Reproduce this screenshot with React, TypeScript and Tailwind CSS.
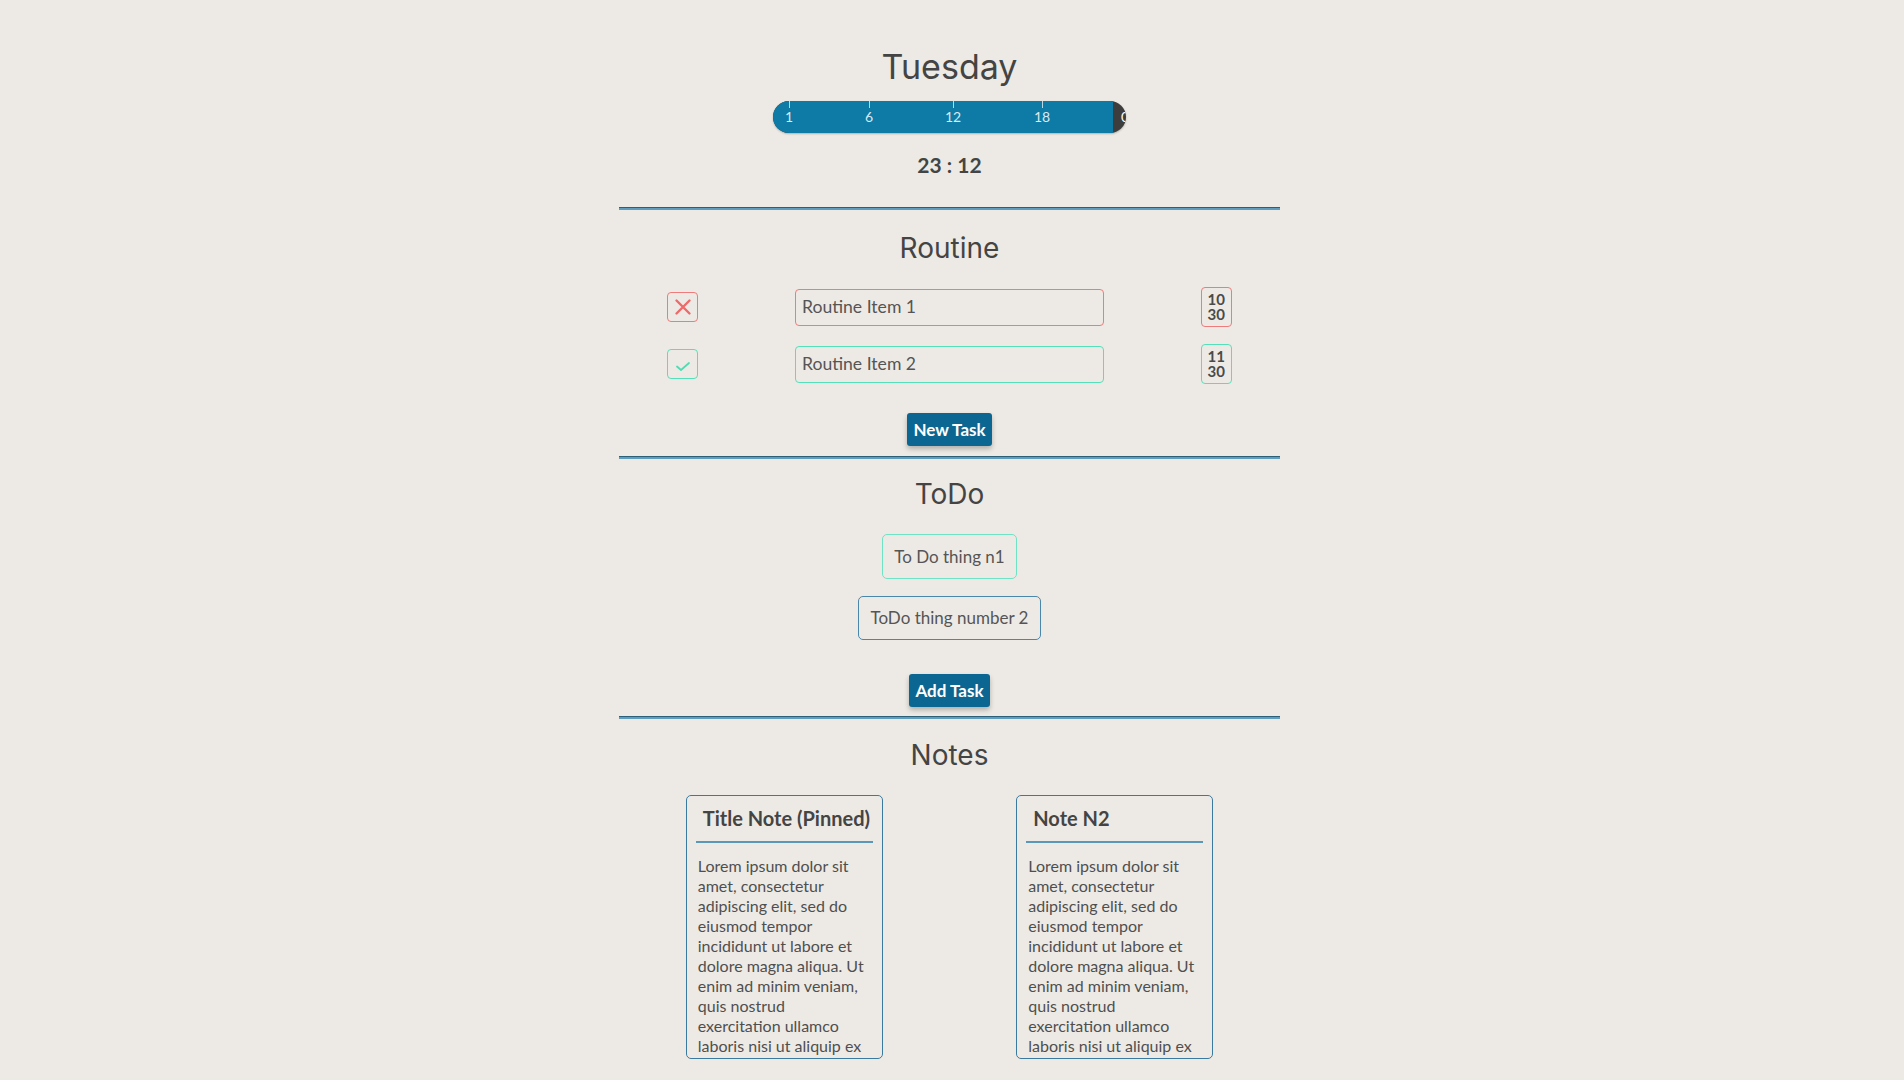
import React from 'react';

const lorem =
  'Lorem ipsum dolor sit amet, consectetur adipiscing elit, sed do eiusmod tempor incididunt ut labore et dolore magna aliqua. Ut enim ad minim veniam, quis nostrud exercitation ullamco laboris nisi ut aliquip ex ea commodo consequat.';

const ticks = [
  { label: '1', x: 16 },
  { label: '6', x: 96 },
  { label: '12', x: 180 },
  { label: '18', x: 269 },
];

function DayBar() {
  return (
    <div className="relative mt-[14px] w-[353px] h-8 rounded-full overflow-hidden bg-[#3d3d3d] shadow-[0_1px_2px_rgba(0,0,0,0.25)]">
      <div className="h-full w-[340px] bg-[#0e7aa6]" />
      {ticks.map((t) => (
        <div key={t.label}>
          <div className="absolute top-0 w-px h-[7px] bg-[#b9d7e5]" style={{ left: t.x }} />
          <span
            className="absolute top-[6px] -translate-x-1/2 text-[14px] leading-[20px] text-[#dbe9f0]"
            style={{ left: t.x }}
          >
            {t.label}
          </span>
        </div>
      ))}
      <span className="absolute top-[6px] left-[348px] text-[14px] leading-[20px] text-white">0</span>
    </div>
  );
}

function Divider({ className }: { className: string }) {
  return (
    <div className={`w-full ${className}`}>
      <div className="h-px bg-[#2c5f78]" />
      <div className="h-[2px] bg-[#5e9dbd]" />
    </div>
  );
}

function Heading({ children, className }: { children: React.ReactNode; className: string }) {
  return (
    <h2 className={`font-['Inter',sans-serif] text-[28px] leading-[36px] text-[#444] ${className}`}>
      {children}
    </h2>
  );
}

function RoutineRow({ done, name, hour, minute, className }: { done: boolean; name: string; hour: string; minute: string; className: string }) {
  const border = done ? 'border-[#55e0bb]' : 'border-[#ee7c7c]';
  return (
    <div className={`w-full h-10 flex items-center justify-around ${className}`}>
      <div className={`w-[31px] h-[30px] rounded-[4px] border-[1.5px] ${border} flex items-center justify-center`}>
        {done ? (
          <svg width="18" height="18" viewBox="0 0 18 18" className="mt-[4px]">
            <path d="M3 9.5 L7 13 L15 6" fill="none" stroke="#4fdcb5" strokeWidth="1.8" strokeLinecap="round" strokeLinejoin="round" />
          </svg>
        ) : (
          <svg width="18" height="18" viewBox="0 0 18 18">
            <path d="M2.5 2.5 L15.5 15.5 M15.5 2.5 L2.5 15.5" fill="none" stroke="#ee6a6a" strokeWidth="2.4" strokeLinecap="round" />
          </svg>
        )}
      </div>
      <div className={`w-[309px] h-[37px] rounded-[4px] border-[1.5px] ${border} flex items-center pl-[6px] text-[17.6px] text-[#555]`}>
        {name}
      </div>
      <div className={`w-[31px] h-10 rounded-[4px] border-[1.5px] ${border} flex flex-col items-center justify-center font-bold text-[15px] leading-[15px] text-[#4a4a4a]`}>
        <span>{hour}</span>
        <span>{minute}</span>
      </div>
    </div>
  );
}

function ActionButton({ label, className }: { label: string; className: string }) {
  return (
    <button className={`h-[33px] px-[6px] rounded-[3px] bg-[#0b6791] text-white font-bold text-[17px] shadow-[0_3px_5px_rgba(0,0,0,0.25)] ${className}`}>
      {label}
    </button>
  );
}

function NoteCard({ title }: { title: string }) {
  return (
    <div className="w-[197px] h-[264px] overflow-hidden rounded-[5px] border-[1.5px] border-[#3a7aa0] pt-[10px]">
      <div className="pl-[16px] text-[20px] leading-[24px] font-bold text-[#444]">{title}</div>
      <div className="mx-[9px] mt-[11px] h-[2px] bg-[#5b98b8]" />
      <p className="mt-[13px] pl-[11px] pr-[11px] text-[16px] leading-[20px] text-[#4f4f4f]">{lorem}</p>
    </div>
  );
}

export default function App() {
  return (
    <div className="min-h-screen bg-[#edeae5] font-['Lato',sans-serif] text-[#444] pr-[5px]">
      <div className="w-[661px] mx-auto flex flex-col items-center pt-[47px]">
        <h1 className="font-['Inter',sans-serif] text-[34px] leading-[40px] text-[#444]">Tuesday</h1>
        <DayBar />
        <div className="mt-[20px] text-[21px] leading-[24px] font-bold text-[#444]">23 : 12</div>

        <Divider className="mt-[30px]" />
        <Heading className="mt-[20px]">Routine</Heading>
        <RoutineRow done={false} name="Routine Item 1" hour="10" minute="30" className="mt-[21px]" />
        <RoutineRow done={true} name="Routine Item 2" hour="11" minute="30" className="mt-[17px]" />
        <ActionButton label="New Task" className="mt-[29px]" />

        <Divider className="mt-[10px]" />
        <Heading className="mt-[17px]">ToDo</Heading>
        <div className="mt-[22px] h-[45px] px-[11px] flex items-center rounded-[5px] border-[1.5px] border-[#6fe3c6] text-[17px] text-[#555]">
          To Do thing n1
        </div>
        <div className="mt-[17px] h-[44px] px-[12px] flex items-center rounded-[5px] border-[1.5px] border-[#4a87aa] text-[17px] text-[#555]">
          ToDo thing number 2
        </div>
        <ActionButton label="Add Task" className="mt-[34px]" />

        <Divider className="mt-[9px]" />
        <Heading className="mt-[18px]">Notes</Heading>
        <div className="mt-[22px] w-full flex justify-around">
          <NoteCard title="Title Note (Pinned)" />
          <NoteCard title="Note N2" />
        </div>
      </div>
    </div>
  );
}
